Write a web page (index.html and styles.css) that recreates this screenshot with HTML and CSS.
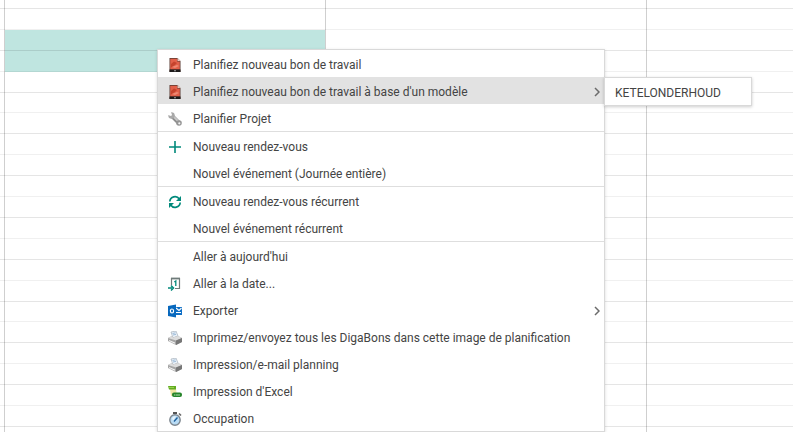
FILE: index.html
```html
<!DOCTYPE html>
<html lang="fr">
<head>
  <meta charset="UTF-8">
  <meta name="viewport" content="width=device-width, initial-scale=1.0">
  <title>Planification</title>
  <link rel="stylesheet" href="styles.css">
</head>
<body>
  <!-- Shared icons -->
  <svg class="icon-defs" aria-hidden="true">
    <symbol id="icon-workorder" viewBox="0 0 14 14">
      <path d="M1.500 0h8l3 3v11h-11z" fill="#5a3a32"/>
      <path d="M2.200 .8h7v2.800h2.600v8H2.200z" fill="#e2604a"/>
      <path d="M3 6l3-2.500 3 1.500-2 2-4 2.500z" fill="#c5432d"/>
      <path d="M4 9l5-2 2 1-4 2z" fill="#ee8a74"/>
      <path d="M9.500 0l3 3h-3z" fill="#efc9be"/>
      <path d="M1.500 11.500h11V14h-11z" fill="#1d1b1b"/>
      <path d="M6.300 12.200h1.400v1H6.300z" fill="#ddd"/>
    </symbol>
    <symbol id="icon-printer" viewBox="0 0 14 14">
      <path d="M3 1l5-1 2 5-5 2z" fill="#e9f0f7" stroke="#9aa6b2" stroke-width=".6"/>
      <path d="M4.500 2.500l3-.7M5 4l3-.7" stroke="#7fa6cc" stroke-width=".7"/>
      <path d="M0 7l4-2 1 1.500 5-1.500 4 2v4l-6 3-8-4z" fill="#a5a5a5"/>
      <path d="M0 7l4-2 1 1.500 5-1.500 4 2-6 2.500z" fill="#dcdcdc"/>
      <path d="M8 9.500l6-2.500v4l-6 3z" fill="#777"/>
      <path d="M1 9l6 2.500v1.200L1 10z" fill="#f4f4f4"/>
    </symbol>
    <symbol id="icon-chevron" viewBox="0 0 6 10">
      <path d="M1 1l4 4-4 4" fill="none" stroke="#6b6b6b" stroke-width="1.500"/>
    </symbol>
  </svg>

  <main class="scheduler">
    <div class="gutter"></div>
    <div class="day">
      <div class="selection"></div>
    </div>
    <div class="day"></div>
    <div class="day"></div>
    <div class="slots">
      <i></i><i></i><i></i><i></i><i></i><i></i><i></i><i></i><i></i><i></i><i></i>
      <i></i><i></i><i></i><i></i><i></i><i></i><i></i><i></i><i></i><i></i><i></i>
    </div>
  </main>

  <nav class="context-menu">
    <ul class="group">
      <li>
        <button type="button"><svg class="icon"><use href="#icon-workorder"/></svg>Planifiez nouveau bon de travail</button>
      </li>
      <li class="has-submenu">
        <button type="button" class="active"><svg class="icon"><use href="#icon-workorder"/></svg>Planifiez nouveau bon de travail à base d'un modèle<svg class="chevron"><use href="#icon-chevron"/></svg></button>
        <div class="submenu">
          <button type="button">KETELONDERHOUD</button>
        </div>
      </li>
      <li>
        <button type="button">
          <svg class="icon" viewBox="0 0 14 14">
            <path d="M3.500 3.500l7.500 7.500" stroke="#8d8d8d" stroke-width="4"/>
            <path d="M4 3l7 7" stroke="#c9c9c9" stroke-width="1.800"/>
            <circle cx="3.500" cy="3.500" r="3.200" fill="#a9a9a9"/>
            <path d="M0 0h3l1 3-1 1-3-1z" fill="#fff"/>
            <circle cx="11" cy="11" r="2.800" fill="#969696"/>
            <circle cx="11.300" cy="11.300" r="1.100" fill="#f4f4f4"/>
          </svg>Planifier Projet</button>
      </li>
    </ul>

    <ul class="group">
      <li>
        <button type="button">
          <svg class="icon" viewBox="0 0 14 14">
            <path d="M7 1v12M1 7h12" stroke="#00897b" stroke-width="1.600"/>
          </svg>Nouveau rendez-vous</button>
      </li>
      <li>
        <button type="button"><span class="icon"></span>Nouvel événement (Journée entière)</button>
      </li>
    </ul>

    <ul class="group">
      <li>
        <button type="button">
          <svg class="icon" viewBox="0 0 14 14">
            <path d="M1.800 6.500a5.200 5.200 0 0 1 9.500-2.500M12.200 7.500a5.200 5.200 0 0 1-9.500 2.500" fill="none" stroke="#00897b" stroke-width="1.700"/>
            <path d="M13 1v5H8z" fill="#00897b"/>
            <path d="M1 13V8h5z" fill="#00897b"/>
          </svg>Nouveau rendez-vous récurrent</button>
      </li>
      <li>
        <button type="button"><span class="icon"></span>Nouvel événement récurrent</button>
      </li>
    </ul>

    <ul class="group">
      <li>
        <button type="button"><span class="icon"></span>Aller à aujourd'hui</button>
      </li>
      <li>
        <button type="button">
          <svg class="icon" viewBox="0 0 14 14">
            <path d="M3.500 8V1.500h8v10H7" fill="none" stroke="#6f7b7a" stroke-width="1.200"/>
            <path d="M3 1.500h9" stroke="#6f7b7a" stroke-width="1.800"/>
            <path d="M6.300 5l1.500-1v5" fill="none" stroke="#00897b" stroke-width="1.300"/>
            <path d="M0 11h4M3 8.500L5.500 11 3 13.500" fill="none" stroke="#00897b" stroke-width="1.500"/>
          </svg>Aller à la date...</button>
      </li>
      <li>
        <button type="button">
          <svg class="icon" viewBox="0 0 14 14">
            <path d="M7 3h7v8H7z" fill="#0f6fc6"/>
            <path d="M8 4l3 2.500L13.500 4M8 8.500h5" fill="none" stroke="#fff" stroke-width="1.100"/>
            <path d="M0 2l8-1.500v13L0 12z" fill="#0868bd"/>
            <ellipse cx="4" cy="7" rx="1.600" ry="2" fill="none" stroke="#fff" stroke-width="1.200"/>
          </svg>Exporter<svg class="chevron"><use href="#icon-chevron"/></svg></button>
      </li>
      <li>
        <button type="button"><svg class="icon"><use href="#icon-printer"/></svg>Imprimez/envoyez tous les DigaBons dans cette image de planification</button>
      </li>
      <li>
        <button type="button"><svg class="icon"><use href="#icon-printer"/></svg>Impression/e-mail planning</button>
      </li>
      <li>
        <button type="button">
          <svg class="icon" viewBox="0 0 14 14">
            <path d="M2 4h6l1 7H3z" fill="#f1e5a4"/>
            <path d="M0 1h8v3.500H1z" fill="#62ac22"/>
            <path d="M1 2.500h5" stroke="#97d14c"/>
            <rect x="4" y="7.500" width="10" height="4.500" rx="2" fill="#27852b"/>
            <path d="M6 10h1.500M9 9v2M11 9v2" stroke="#c4e7bd" stroke-width=".9"/>
          </svg>Impression d'Excel</button>
      </li>
      <li>
        <button type="button">
          <svg class="icon" viewBox="0 0 14 14">
            <path d="M5 0h4v2H5z" fill="#555"/>
            <path d="M11 1.500l2 2" stroke="#666" stroke-width="1.600"/>
            <circle cx="7" cy="8" r="5.200" fill="#b9dcf5" stroke="#7d868e" stroke-width="1.400"/>
            <path d="M4 6a3.600 3.600 0 0 1 4-1.500L5 9z" fill="#e6f4fd"/>
            <path d="M6 9.500L9.500 5.500" stroke="#1d5f9c" stroke-width="1.400"/>
          </svg>Occupation</button>
      </li>
    </ul>
  </nav>
</body>
</html>
```
FILE: styles.css
```css
* {
  box-sizing: border-box;
}

body {
  margin: 0;
  background: #fff;
  color: #444;
  font-family: Roboto, sans-serif;
  font-size: 12px;
  overflow: hidden;
}

.icon-defs {
  position: absolute;
  width: 0;
  height: 0;
}

/* Calendar behind the menu */
.scheduler {
  position: relative;
  display: grid;
  grid-template-columns: 5px 321px 321px 1fr;
  min-height: 100vh;
}

.gutter,
.day {
  border-right: 1px solid #cfcfcf;
}

.day:nth-child(4) {
  border-right: 0;
}

.day,
.slots {
  display: grid;
  grid-template-rows: 9px repeat(20, 1fr) 5px;
}

.slots {
  position: absolute;
  inset: 0;
}

.slots i {
  border-bottom: 1px solid rgba(0, 0, 0, 0.06);
}

.slots i:nth-child(odd) {
  border-bottom-color: rgba(0, 0, 0, 0.1);
}

.slots i:last-child {
  border-bottom: 0;
}

.selection {
  grid-row: 3 / 5;
  background: #bfe5e0;
}

/* Context menu */
.context-menu {
  position: absolute;
  top: 49px;
  left: 157px;
  width: 448px;
  background: #fff;
  border: 1px solid #d9d9d9;
  box-shadow: 0 1px 3px rgba(0, 0, 0, 0.15);
}

.group {
  list-style: none;
  margin: 0;
  padding: 0;
}

.group + .group {
  border-top: 1px solid #dedede;
}

.context-menu button {
  display: flex;
  align-items: center;
  width: 100%;
  height: 27px;
  padding: 2px 4px 0 10px;
  border: 0;
  background: none;
  color: inherit;
  font: inherit;
  text-align: left;
  white-space: nowrap;
}

.context-menu button:hover,
.context-menu button.active {
  background: #e2e2e2;
}

.icon {
  flex: none;
  width: 14px;
  height: 14px;
  margin-right: 11px;
}

.chevron {
  width: 6px;
  height: 10px;
  margin-left: auto;
}

.has-submenu {
  position: relative;
}

.submenu {
  position: absolute;
  top: 0;
  left: 100%;
  width: 148px;
  background: #fff;
  border: 1px solid #d9d9d9;
  box-shadow: 0 1px 3px rgba(0, 0, 0, 0.2);
}
```
